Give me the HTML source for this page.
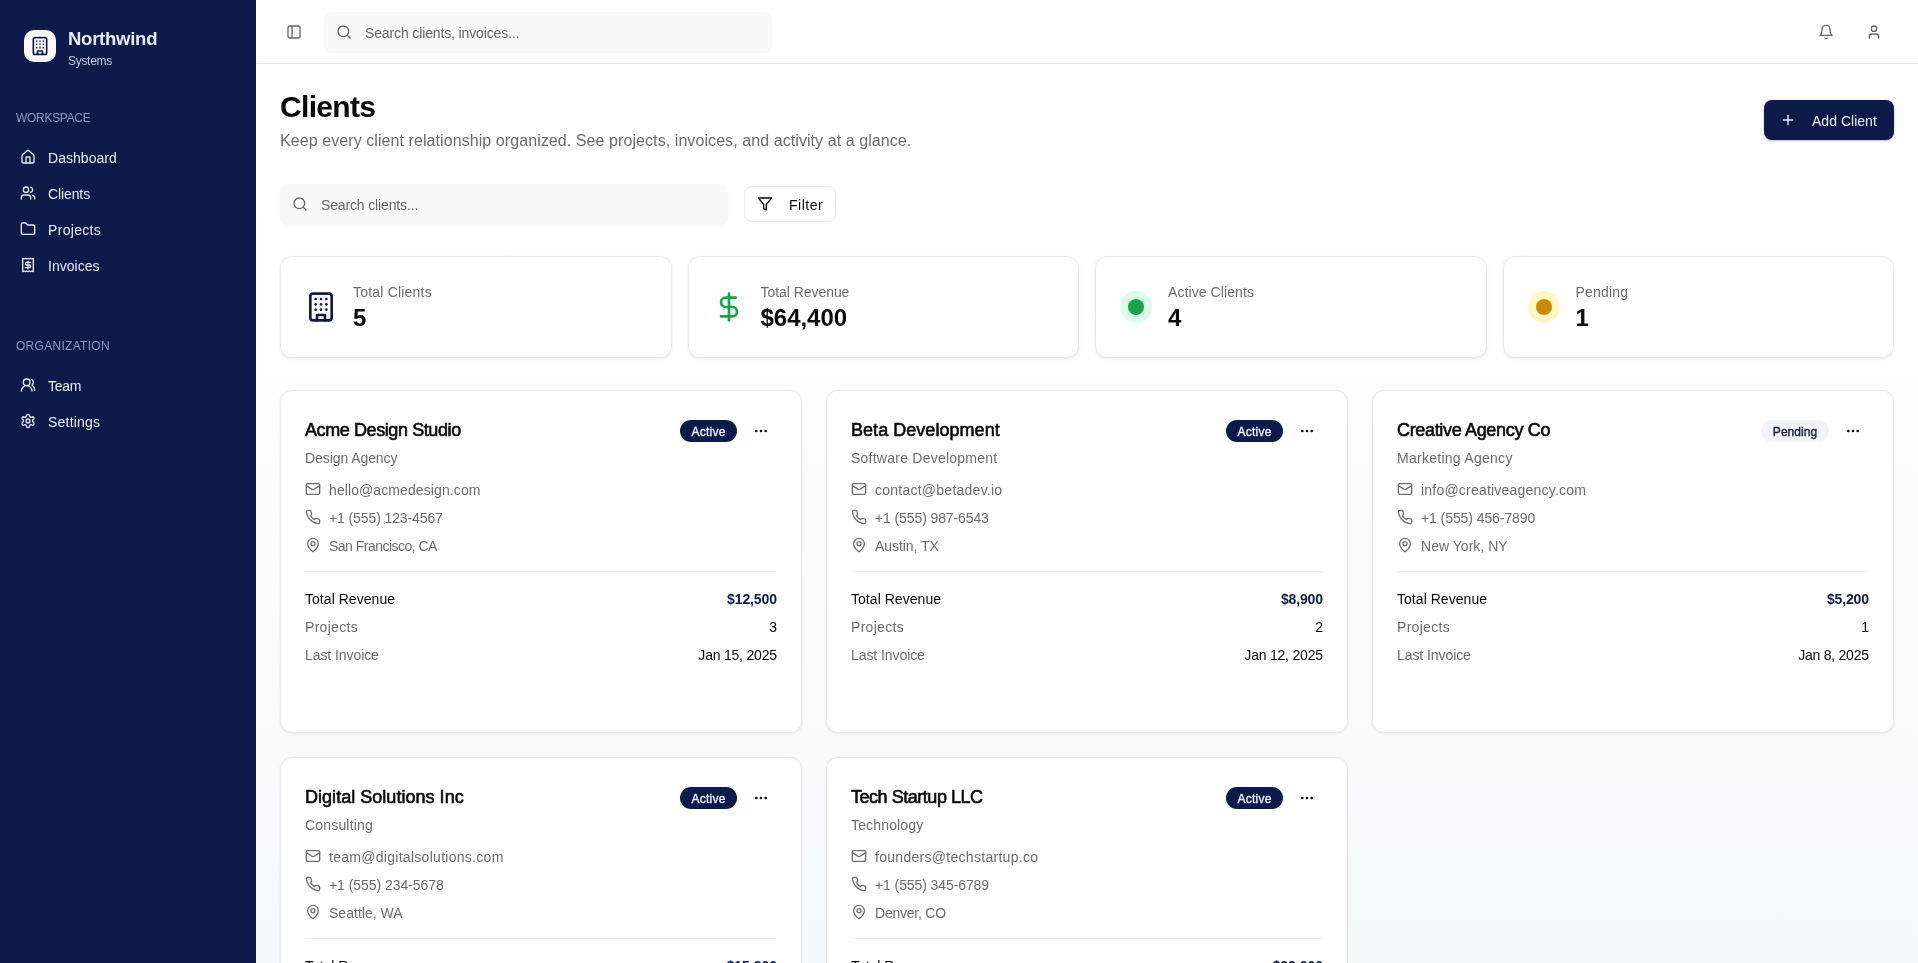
<!DOCTYPE html>
<html lang="en"><head><meta charset="utf-8"><title>Clients</title>
<style>
*{box-sizing:border-box;margin:0;padding:0}
html,body{width:1918px;height:963px;overflow:hidden}
body{font-family:"Liberation Sans",sans-serif;background:#fff;color:#0a0a0a;position:relative;will-change:transform}
.ic{display:block;flex:none}
.side{position:absolute;left:0;top:0;width:256px;height:963px;background:#0e1b4a;color:#e6ebf8}
.brand{position:absolute;left:24px;top:30px;display:flex;align-items:flex-start}
.logo{width:32px;height:32px;border-radius:10px;background:#fafafa;color:#0e1b4a;display:flex;align-items:center;justify-content:center}
.bt{margin-left:12px;margin-top:-1px}
.b1{font-size:18.5px;font-weight:bold;line-height:20px;}
.b2{font-size:12px;line-height:16px;color:#c3c8dc;margin-top:4px;}
.grp{position:absolute;left:16px;font-size:12px;line-height:16px;color:#8e97bb}
.g1{top:110px}.g2{top:338px;}
.nav{position:absolute;left:8px;width:240px;height:36px;display:flex;align-items:center;padding-left:12px;font-size:14px}
.nav b{font-weight:normal;margin-left:12px;position:relative;top:1px}
.top{position:absolute;left:256px;top:0;width:1662px;height:64px;background:#fff;border-bottom:1px solid #e5e5e5}
.tog{position:absolute;left:30px;top:24px;color:#666}
.srch{position:absolute;height:40px;border-radius:8px;background:#f9f9fa;display:flex;align-items:center;color:#666;font-size:14px;box-shadow:0 1px 2px rgba(0,0,0,.04)}
.srch .ic{margin-left:12px;color:#666}
.srch b{font-weight:normal;margin-left:13px;position:relative;top:1px}
.s1{left:68px;top:12px;width:448px}
.tr{position:absolute;right:0;top:0}
.tb{position:absolute;top:24px;color:#666}
.main{position:absolute;left:256px;top:64px;width:1662px;height:899px;overflow:hidden;background:linear-gradient(to bottom,#ffffff 0%,#fefefe 30%,#fafafb 75%,#f8f9fb 100%)}
h1{position:absolute;left:24px;top:25px;font-size:30px;line-height:36px;font-weight:bold;}
.sub{position:absolute;left:24px;top:65px;font-size:16px;line-height:24px;color:#6c6c6c;white-space:nowrap;}
.add{position:absolute;left:1508px;top:36px;width:130px;height:40px;border-radius:8px;background:#0e1b4a;color:#eaeffc;display:flex;align-items:center;font-size:14px;box-shadow:0 1px 3px rgba(15,28,77,.18),0 1px 2px rgba(15,28,77,.12)}
.add .ic{margin-left:16px}
.add b{font-weight:normal;margin-left:16px;position:relative;top:1px}
.tools{position:absolute;left:24px;top:120px;height:40px}
.s2{left:0;top:0;width:448px}
.filter{position:absolute;left:464px;top:2px;width:92px;height:36px;border:1px solid #e9e9ea;border-radius:8px;background:#fff;display:flex;align-items:center;font-size:14px;white-space:nowrap}
.filter .ic{margin-left:12px}
.filter b{font-weight:normal;margin-left:16px;position:relative;top:1px}
.stats{position:absolute;left:24px;top:192px;width:1614px;display:flex;gap:16px}
.stat{flex:1;height:102px;border:1px solid #e8e8ea;border-radius:12px;background:#fff;display:flex;align-items:center;padding:0 24px;box-shadow:0 1px 3px rgba(0,0,0,.08)}
.st{margin-left:16px;position:relative;top:1px}
.sl{font-size:14px;line-height:20px;color:#6c6c6c}
.sv{font-size:24px;line-height:32px;font-weight:bold}
.navy{color:#0e1b4a}.green{color:#16a34a}
.dot{width:32px;height:32px;border-radius:50%;display:flex;align-items:center;justify-content:center}
.dot i{width:16px;height:16px;border-radius:50%;display:block}
.dg{background:#dcfce7}.dg i{background:#16a34a}
.dy{background:#fef9c3}.dy i{background:#ca8a04}
.cards{position:absolute;left:24px;top:326px;width:1614px;display:grid;grid-template-columns:repeat(3,1fr);gap:24px}
.card{height:343px;border:1px solid #e8e8ea;border-radius:12px;background:#fff;box-shadow:0 1px 3px rgba(0,0,0,.08);padding:24px;position:relative}
.ch{display:flex;justify-content:space-between}
.cn{font-size:18px;line-height:28px;font-weight:normal;-webkit-text-stroke:.6px currentColor;position:relative;top:1px;}
.ck{font-size:14px;line-height:20px;color:#6c6c6c;margin-top:4px;position:relative;top:1px}
.cr{display:flex;align-items:flex-start}
.badge{height:22px;width:57px;text-align:center;border-radius:11px;background:#0e1b4a;color:#eaeffc;font-size:12px;font-weight:normal;-webkit-text-stroke:.35px currentColor;line-height:24px;margin-top:5px;white-space:nowrap;overflow:hidden}
.badge.pend{width:68px;margin-left:-1px;background:#f2f4f8;color:#141c44}
.more{width:32px;height:32px;display:flex;align-items:center;justify-content:center;margin-left:8px}
.ct{margin-top:9px}
.row{display:flex;align-items:center;height:28px;font-size:14px;color:#6c6c6c}
.row b{font-weight:normal;margin-left:8px}
.row .ic{color:#6e6e6e;position:relative;top:-1px}
.cf{margin-top:11px;border-top:1px solid #f1f1f2;padding-top:13px}
.kv{display:flex;justify-content:space-between;height:28px;align-items:center;font-size:14px}
.k2{color:#6c6c6c}
.v1{font-weight:bold;color:#0e1b4a}

</style></head>
<body>
<aside class="side">
<div class="brand"><div class="logo"><svg class="ic " width="20" height="20" viewBox="0 0 24 24" fill="none" stroke="currentColor" stroke-width="2" stroke-linecap="round" stroke-linejoin="round" style=""><rect width="16" height="20" x="4" y="2" rx="2" ry="2"/><path d="M9 22v-4h6v4"/><path d="M8 6h.01"/><path d="M16 6h.01"/><path d="M12 6h.01"/><path d="M12 10h.01"/><path d="M12 14h.01"/><path d="M16 10h.01"/><path d="M16 14h.01"/><path d="M8 10h.01"/><path d="M8 14h.01"/></svg></div><div class="bt"><div class="b1"><span style="letter-spacing:-0.250px">Northwind</span></div><div class="b2"><span style="letter-spacing:-0.300px">Systems</span></div></div></div>
<div class="grp g1"><span style="letter-spacing:-0.300px">WORKSPACE</span></div>
<div class="nav" style="top:139px"><svg class="ic " width="16" height="16" viewBox="0 0 24 24" fill="none" stroke="currentColor" stroke-width="2" stroke-linecap="round" stroke-linejoin="round" style=""><path d="M15 21v-8a1 1 0 0 0-1-1h-4a1 1 0 0 0-1 1v8"/><path d="M3 10a2 2 0 0 1 .709-1.528l7-5.999a2 2 0 0 1 2.582 0l7 5.999A2 2 0 0 1 21 10v9a2 2 0 0 1-2 2H5a2 2 0 0 1-2-2z"/></svg><b><span style="letter-spacing:0.044px">Dashboard</span></b></div>
<div class="nav" style="top:175px"><svg class="ic " width="16" height="16" viewBox="0 0 24 24" fill="none" stroke="currentColor" stroke-width="2" stroke-linecap="round" stroke-linejoin="round" style=""><path d="M16 21v-2a4 4 0 0 0-4-4H6a4 4 0 0 0-4 4v2"/><circle cx="9" cy="7" r="4"/><path d="M22 21v-2a4 4 0 0 0-3-3.87"/><path d="M16 3.13a4 4 0 0 1 0 7.75"/></svg><b><span style="letter-spacing:-0.108px">Clients</span></b></div>
<div class="nav" style="top:211px"><svg class="ic " width="16" height="16" viewBox="0 0 24 24" fill="none" stroke="currentColor" stroke-width="2" stroke-linecap="round" stroke-linejoin="round" style=""><path d="M20 20a2 2 0 0 0 2-2V8a2 2 0 0 0-2-2h-7.9a2 2 0 0 1-1.69-.9L9.6 3.9A2 2 0 0 0 7.93 3H4a2 2 0 0 0-2 2v13a2 2 0 0 0 2 2Z"/></svg><b><span style="letter-spacing:0.314px">Projects</span></b></div>
<div class="nav" style="top:247px"><svg class="ic " width="16" height="16" viewBox="0 0 24 24" fill="none" stroke="currentColor" stroke-width="2" stroke-linecap="round" stroke-linejoin="round" style=""><path d="M4 2v20l2-1 2 1 2-1 2 1 2-1 2 1 2-1 2 1V2l-2 1-2-1-2 1-2-1-2 1-2-1-2 1Z"/><path d="M16 8h-6a2 2 0 1 0 0 4h4a2 2 0 1 1 0 4H8"/><path d="M12 17.5v-11"/></svg><b><span style="letter-spacing:0.014px">Invoices</span></b></div>
<div class="grp g2"><span style="letter-spacing:0.291px">ORGANIZATION</span></div>
<div class="nav" style="top:367px"><svg class="ic " width="16" height="16" viewBox="0 0 24 24" fill="none" stroke="currentColor" stroke-width="2" stroke-linecap="round" stroke-linejoin="round" style=""><path d="M18 21a8 8 0 0 0-16 0"/><circle cx="10" cy="8" r="5"/><path d="M22 20c0-3.37-2-6.5-4-8a5 5 0 0 0-.45-8.3"/></svg><b><span style="letter-spacing:-0.267px">Team</span></b></div>
<div class="nav" style="top:403px"><svg class="ic " width="16" height="16" viewBox="0 0 24 24" fill="none" stroke="currentColor" stroke-width="2" stroke-linecap="round" stroke-linejoin="round" style=""><path d="M12.22 2h-.44a2 2 0 0 0-2 2v.18a2 2 0 0 1-1 1.73l-.43.25a2 2 0 0 1-2 0l-.15-.08a2 2 0 0 0-2.73.73l-.22.38a2 2 0 0 0 .73 2.73l.15.1a2 2 0 0 1 1 1.72v.51a2 2 0 0 1-1 1.74l-.15.09a2 2 0 0 0-.73 2.73l.22.38a2 2 0 0 0 2.73.73l.15-.08a2 2 0 0 1 2 0l.43.25a2 2 0 0 1 1 1.73V20a2 2 0 0 0 2 2h.44a2 2 0 0 0 2-2v-.18a2 2 0 0 1 1-1.73l.43-.25a2 2 0 0 1 2 0l.15.08a2 2 0 0 0 2.73-.73l.22-.39a2 2 0 0 0-.73-2.73l-.15-.08a2 2 0 0 1-1-1.74v-.5a2 2 0 0 1 1-1.74l.15-.09a2 2 0 0 0 .73-2.73l-.22-.38a2 2 0 0 0-2.73-.73l-.15.08a2 2 0 0 1-2 0l-.43-.25a2 2 0 0 1-1-1.73V4a2 2 0 0 0-2-2z"/><circle cx="12" cy="12" r="3"/></svg><b><span style="letter-spacing:0.214px">Settings</span></b></div>
</aside>
<header class="top">
<div class="tog"><svg class="ic " width="16" height="16" viewBox="0 0 24 24" fill="none" stroke="currentColor" stroke-width="2" stroke-linecap="round" stroke-linejoin="round" style=""><rect width="18" height="18" x="3" y="3" rx="2"/><path d="M9 3v18"/></svg></div>
<div class="srch s1"><svg class="ic " width="16" height="16" viewBox="0 0 24 24" fill="none" stroke="currentColor" stroke-width="2" stroke-linecap="round" stroke-linejoin="round" style=""><circle cx="11" cy="11" r="8"/><path d="m21 21-4.3-4.3"/></svg><b><span style="letter-spacing:-0.131px">Search clients, invoices...</span></b></div>
<div class="tb" style="left:1562px"><svg class="ic " width="16" height="16" viewBox="0 0 24 24" fill="none" stroke="currentColor" stroke-width="2" stroke-linecap="round" stroke-linejoin="round" style=""><path d="M6 8a6 6 0 0 1 12 0c0 7 3 9 3 9H3s3-2 3-9"/><path d="M10.3 21a1.94 1.94 0 0 0 3.4 0"/></svg></div><div class="tb" style="left:1610px"><svg class="ic " width="16" height="16" viewBox="0 0 24 24" fill="none" stroke="currentColor" stroke-width="2" stroke-linecap="round" stroke-linejoin="round" style=""><path d="M19 21v-2a4 4 0 0 0-4-4H9a4 4 0 0 0-4 4v2"/><circle cx="12" cy="7" r="4"/></svg></div>
</header>
<main class="main">
<div class="ph"><div><h1><span style="letter-spacing:-0.683px">Clients</span></h1><p class="sub"><span style="letter-spacing:0.077px">Keep every client relationship organized. See projects, invoices, and activity at a glance.</span></p></div>
<div class="add"><svg class="ic " width="16" height="16" viewBox="0 0 24 24" fill="none" stroke="currentColor" stroke-width="2" stroke-linecap="round" stroke-linejoin="round" style=""><path d="M5 12h14"/><path d="M12 5v14"/></svg><b><span style="letter-spacing:0.022px">Add Client</span></b></div></div>
<div class="tools"><div class="srch s2"><svg class="ic " width="16" height="16" viewBox="0 0 24 24" fill="none" stroke="currentColor" stroke-width="2" stroke-linecap="round" stroke-linejoin="round" style=""><circle cx="11" cy="11" r="8"/><path d="m21 21-4.3-4.3"/></svg><b><span style="letter-spacing:-0.144px">Search clients...</span></b></div><div class="filter"><svg class="ic " width="16" height="16" viewBox="0 0 24 24" fill="none" stroke="currentColor" stroke-width="2" stroke-linecap="round" stroke-linejoin="round" style=""><polygon points="22 3 2 3 10 12.46 10 19 14 21 14 12.46 22 3"/></svg><b><span style="letter-spacing:0.520px">Filter</span></b></div></div>
<div class="stats">
<div class="stat"><svg class="ic navy" width="32" height="32" viewBox="0 0 24 24" fill="none" stroke="currentColor" stroke-width="2" stroke-linecap="round" stroke-linejoin="round" style=""><rect width="16" height="20" x="4" y="2" rx="2" ry="2"/><path d="M9 22v-4h6v4"/><path d="M8 6h.01"/><path d="M16 6h.01"/><path d="M12 6h.01"/><path d="M12 10h.01"/><path d="M12 14h.01"/><path d="M16 10h.01"/><path d="M16 14h.01"/><path d="M8 10h.01"/><path d="M8 14h.01"/></svg><div class="st"><div class="sl"><span style="letter-spacing:0.200px">Total Clients</span></div><div class="sv"><span>5</span></div></div></div>
<div class="stat"><svg class="ic green" width="32" height="32" viewBox="0 0 24 24" fill="none" stroke="currentColor" stroke-width="2" stroke-linecap="round" stroke-linejoin="round" style=""><line x1="12" x2="12" y1="2" y2="22"/><path d="M17 5H9.5a3.5 3.5 0 0 0 0 7h5a3.5 3.5 0 0 1 0 7H6"/></svg><div class="st"><div class="sl"><span style="letter-spacing:-0.050px">Total Revenue</span></div><div class="sv"><span style="letter-spacing:-0.033px">$64,400</span></div></div></div>
<div class="stat"><div class="dot dg"><i></i></div><div class="st"><div class="sl"><span style="letter-spacing:0.085px">Active Clients</span></div><div class="sv"><span>4</span></div></div></div>
<div class="stat"><div class="dot dy"><i></i></div><div class="st"><div class="sl"><span style="letter-spacing:0.200px">Pending</span></div><div class="sv"><span>1</span></div></div></div>
</div>
<div class="cards">
<div class="card">
<div class="ch"><div><div class="cn"><span style="letter-spacing:-0.406px">Acme Design Studio</span></div><div class="ck"><span style="letter-spacing:-0.075px">Design Agency</span></div></div><div class="cr"><span class="badge"><span style="letter-spacing:0.240px">Active</span></span><span class="more"><svg class="ic " width="16" height="16" viewBox="0 0 24 24" fill="none" stroke="currentColor" stroke-width="2" stroke-linecap="round" stroke-linejoin="round" style=""><circle cx="12" cy="12" r="1"/><circle cx="19" cy="12" r="1"/><circle cx="5" cy="12" r="1"/></svg></span></div></div>
<div class="ct">
<div class="row"><svg class="ic " width="16" height="16" viewBox="0 0 24 24" fill="none" stroke="currentColor" stroke-width="2" stroke-linecap="round" stroke-linejoin="round" style=""><rect width="20" height="16" x="2" y="4" rx="2"/><path d="m22 7-8.97 5.7a1.94 1.94 0 0 1-2.06 0L2 7"/></svg><b><span style="letter-spacing:0.095px">hello@acmedesign.com</span></b></div>
<div class="row"><svg class="ic " width="16" height="16" viewBox="0 0 24 24" fill="none" stroke="currentColor" stroke-width="2" stroke-linecap="round" stroke-linejoin="round" style=""><path d="M22 16.92v3a2 2 0 0 1-2.18 2 19.79 19.79 0 0 1-8.63-3.07 19.5 19.5 0 0 1-6-6 19.79 19.79 0 0 1-3.07-8.67A2 2 0 0 1 4.11 2h3a2 2 0 0 1 2 1.72 12.84 12.84 0 0 0 .7 2.81 2 2 0 0 1-.45 2.11L8.09 9.91a16 16 0 0 0 6 6l1.27-1.27a2 2 0 0 1 2.11-.45 12.84 12.84 0 0 0 2.81.7A2 2 0 0 1 22 16.92z"/></svg><b><span style="letter-spacing:-0.106px">+1 (555) 123-4567</span></b></div>
<div class="row"><svg class="ic " width="16" height="16" viewBox="0 0 24 24" fill="none" stroke="currentColor" stroke-width="2" stroke-linecap="round" stroke-linejoin="round" style=""><path d="M20 10c0 4.993-5.539 10.193-7.399 11.799a1 1 0 0 1-1.202 0C9.539 20.193 4 14.993 4 10a8 8 0 0 1 16 0"/><circle cx="12" cy="10" r="3"/></svg><b><span style="letter-spacing:-0.519px">San Francisco, CA</span></b></div>
</div>
<div class="cf">
<div class="kv"><span class="k1"><span style="letter-spacing:0.042px">Total Revenue</span></span><span class="v1"><span style="letter-spacing:-0.117px;margin-right:0.117px">$12,500</span></span></div>
<div class="kv"><span class="k2"><span style="letter-spacing:0.300px">Projects</span></span><span class="v2"><span>3</span></span></div>
<div class="kv"><span class="k2"><span style="letter-spacing:-0.073px">Last Invoice</span></span><span class="v2"><span style="letter-spacing:-0.209px;margin-right:0.209px">Jan 15, 2025</span></span></div>
</div>
</div>
<div class="card">
<div class="ch"><div><div class="cn"><span style="letter-spacing:0.040px">Beta Development</span></div><div class="ck"><span style="letter-spacing:0.242px">Software Development</span></div></div><div class="cr"><span class="badge"><span style="letter-spacing:0.240px">Active</span></span><span class="more"><svg class="ic " width="16" height="16" viewBox="0 0 24 24" fill="none" stroke="currentColor" stroke-width="2" stroke-linecap="round" stroke-linejoin="round" style=""><circle cx="12" cy="12" r="1"/><circle cx="19" cy="12" r="1"/><circle cx="5" cy="12" r="1"/></svg></span></div></div>
<div class="ct">
<div class="row"><svg class="ic " width="16" height="16" viewBox="0 0 24 24" fill="none" stroke="currentColor" stroke-width="2" stroke-linecap="round" stroke-linejoin="round" style=""><rect width="20" height="16" x="2" y="4" rx="2"/><path d="m22 7-8.97 5.7a1.94 1.94 0 0 1-2.06 0L2 7"/></svg><b><span style="letter-spacing:0.247px">contact@betadev.io</span></b></div>
<div class="row"><svg class="ic " width="16" height="16" viewBox="0 0 24 24" fill="none" stroke="currentColor" stroke-width="2" stroke-linecap="round" stroke-linejoin="round" style=""><path d="M22 16.92v3a2 2 0 0 1-2.18 2 19.79 19.79 0 0 1-8.63-3.07 19.5 19.5 0 0 1-6-6 19.79 19.79 0 0 1-3.07-8.67A2 2 0 0 1 4.11 2h3a2 2 0 0 1 2 1.72 12.84 12.84 0 0 0 .7 2.81 2 2 0 0 1-.45 2.11L8.09 9.91a16 16 0 0 0 6 6l1.27-1.27a2 2 0 0 1 2.11-.45 12.84 12.84 0 0 0 2.81.7A2 2 0 0 1 22 16.92z"/></svg><b><span style="letter-spacing:-0.106px">+1 (555) 987-6543</span></b></div>
<div class="row"><svg class="ic " width="16" height="16" viewBox="0 0 24 24" fill="none" stroke="currentColor" stroke-width="2" stroke-linecap="round" stroke-linejoin="round" style=""><path d="M20 10c0 4.993-5.539 10.193-7.399 11.799a1 1 0 0 1-1.202 0C9.539 20.193 4 14.993 4 10a8 8 0 0 1 16 0"/><circle cx="12" cy="10" r="3"/></svg><b><span style="letter-spacing:-0.067px">Austin, TX</span></b></div>
</div>
<div class="cf">
<div class="kv"><span class="k1"><span style="letter-spacing:0.042px">Total Revenue</span></span><span class="v1"><span style="letter-spacing:-0.160px;margin-right:0.160px">$8,900</span></span></div>
<div class="kv"><span class="k2"><span style="letter-spacing:0.300px">Projects</span></span><span class="v2"><span>2</span></span></div>
<div class="kv"><span class="k2"><span style="letter-spacing:-0.073px">Last Invoice</span></span><span class="v2"><span style="letter-spacing:-0.209px;margin-right:0.209px">Jan 12, 2025</span></span></div>
</div>
</div>
<div class="card">
<div class="ch"><div><div class="cn"><span style="letter-spacing:-0.335px">Creative Agency Co</span></div><div class="ck"><span style="letter-spacing:0.273px">Marketing Agency</span></div></div><div class="cr"><span class="badge pend"><span style="letter-spacing:0.033px">Pending</span></span><span class="more"><svg class="ic " width="16" height="16" viewBox="0 0 24 24" fill="none" stroke="currentColor" stroke-width="2" stroke-linecap="round" stroke-linejoin="round" style=""><circle cx="12" cy="12" r="1"/><circle cx="19" cy="12" r="1"/><circle cx="5" cy="12" r="1"/></svg></span></div></div>
<div class="ct">
<div class="row"><svg class="ic " width="16" height="16" viewBox="0 0 24 24" fill="none" stroke="currentColor" stroke-width="2" stroke-linecap="round" stroke-linejoin="round" style=""><rect width="20" height="16" x="2" y="4" rx="2"/><path d="m22 7-8.97 5.7a1.94 1.94 0 0 1-2.06 0L2 7"/></svg><b><span style="letter-spacing:0.214px">info@creativeagency.com</span></b></div>
<div class="row"><svg class="ic " width="16" height="16" viewBox="0 0 24 24" fill="none" stroke="currentColor" stroke-width="2" stroke-linecap="round" stroke-linejoin="round" style=""><path d="M22 16.92v3a2 2 0 0 1-2.18 2 19.79 19.79 0 0 1-8.63-3.07 19.5 19.5 0 0 1-6-6 19.79 19.79 0 0 1-3.07-8.67A2 2 0 0 1 4.11 2h3a2 2 0 0 1 2 1.72 12.84 12.84 0 0 0 .7 2.81 2 2 0 0 1-.45 2.11L8.09 9.91a16 16 0 0 0 6 6l1.27-1.27a2 2 0 0 1 2.11-.45 12.84 12.84 0 0 0 2.81.7A2 2 0 0 1 22 16.92z"/></svg><b><span style="letter-spacing:-0.081px">+1 (555) 456-7890</span></b></div>
<div class="row"><svg class="ic " width="16" height="16" viewBox="0 0 24 24" fill="none" stroke="currentColor" stroke-width="2" stroke-linecap="round" stroke-linejoin="round" style=""><path d="M20 10c0 4.993-5.539 10.193-7.399 11.799a1 1 0 0 1-1.202 0C9.539 20.193 4 14.993 4 10a8 8 0 0 1 16 0"/><circle cx="12" cy="10" r="3"/></svg><b><span style="letter-spacing:0.027px">New York, NY</span></b></div>
</div>
<div class="cf">
<div class="kv"><span class="k1"><span style="letter-spacing:0.042px">Total Revenue</span></span><span class="v1"><span style="letter-spacing:-0.160px;margin-right:0.160px">$5,200</span></span></div>
<div class="kv"><span class="k2"><span style="letter-spacing:0.300px">Projects</span></span><span class="v2"><span>1</span></span></div>
<div class="kv"><span class="k2"><span style="letter-spacing:-0.073px">Last Invoice</span></span><span class="v2"><span style="letter-spacing:-0.230px;margin-right:0.230px">Jan 8, 2025</span></span></div>
</div>
</div>
<div class="card">
<div class="ch"><div><div class="cn"><span style="letter-spacing:0.030px">Digital Solutions Inc</span></div><div class="ck"><span style="letter-spacing:0.178px">Consulting</span></div></div><div class="cr"><span class="badge"><span style="letter-spacing:0.240px">Active</span></span><span class="more"><svg class="ic " width="16" height="16" viewBox="0 0 24 24" fill="none" stroke="currentColor" stroke-width="2" stroke-linecap="round" stroke-linejoin="round" style=""><circle cx="12" cy="12" r="1"/><circle cx="19" cy="12" r="1"/><circle cx="5" cy="12" r="1"/></svg></span></div></div>
<div class="ct">
<div class="row"><svg class="ic " width="16" height="16" viewBox="0 0 24 24" fill="none" stroke="currentColor" stroke-width="2" stroke-linecap="round" stroke-linejoin="round" style=""><rect width="20" height="16" x="2" y="4" rx="2"/><path d="m22 7-8.97 5.7a1.94 1.94 0 0 1-2.06 0L2 7"/></svg><b><span style="letter-spacing:0.283px">team@digitalsolutions.com</span></b></div>
<div class="row"><svg class="ic " width="16" height="16" viewBox="0 0 24 24" fill="none" stroke="currentColor" stroke-width="2" stroke-linecap="round" stroke-linejoin="round" style=""><path d="M22 16.92v3a2 2 0 0 1-2.18 2 19.79 19.79 0 0 1-8.63-3.07 19.5 19.5 0 0 1-6-6 19.79 19.79 0 0 1-3.07-8.67A2 2 0 0 1 4.11 2h3a2 2 0 0 1 2 1.72 12.84 12.84 0 0 0 .7 2.81 2 2 0 0 1-.45 2.11L8.09 9.91a16 16 0 0 0 6 6l1.27-1.27a2 2 0 0 1 2.11-.45 12.84 12.84 0 0 0 2.81.7A2 2 0 0 1 22 16.92z"/></svg><b><span style="letter-spacing:-0.056px">+1 (555) 234-5678</span></b></div>
<div class="row"><svg class="ic " width="16" height="16" viewBox="0 0 24 24" fill="none" stroke="currentColor" stroke-width="2" stroke-linecap="round" stroke-linejoin="round" style=""><path d="M20 10c0 4.993-5.539 10.193-7.399 11.799a1 1 0 0 1-1.202 0C9.539 20.193 4 14.993 4 10a8 8 0 0 1 16 0"/><circle cx="12" cy="10" r="3"/></svg><b><span style="letter-spacing:0.020px">Seattle, WA</span></b></div>
</div>
<div class="cf">
<div class="kv"><span class="k1"><span style="letter-spacing:-0.050px">Total Revenue</span></span><span class="v1"><span>$15,800</span></span></div>
<div class="kv"><span class="k2"><span style="letter-spacing:0.314px">Projects</span></span><span class="v2"><span>4</span></span></div>
<div class="kv"><span class="k2"><span style="letter-spacing:-0.073px">Last Invoice</span></span><span class="v2"><span>Jan 10, 2025</span></span></div>
</div>
</div>
<div class="card">
<div class="ch"><div><div class="cn"><span style="letter-spacing:-0.467px">Tech Startup LLC</span></div><div class="ck"><span style="letter-spacing:0.156px">Technology</span></div></div><div class="cr"><span class="badge"><span style="letter-spacing:0.240px">Active</span></span><span class="more"><svg class="ic " width="16" height="16" viewBox="0 0 24 24" fill="none" stroke="currentColor" stroke-width="2" stroke-linecap="round" stroke-linejoin="round" style=""><circle cx="12" cy="12" r="1"/><circle cx="19" cy="12" r="1"/><circle cx="5" cy="12" r="1"/></svg></span></div></div>
<div class="ct">
<div class="row"><svg class="ic " width="16" height="16" viewBox="0 0 24 24" fill="none" stroke="currentColor" stroke-width="2" stroke-linecap="round" stroke-linejoin="round" style=""><rect width="20" height="16" x="2" y="4" rx="2"/><path d="m22 7-8.97 5.7a1.94 1.94 0 0 1-2.06 0L2 7"/></svg><b><span style="letter-spacing:0.291px">founders@techstartup.co</span></b></div>
<div class="row"><svg class="ic " width="16" height="16" viewBox="0 0 24 24" fill="none" stroke="currentColor" stroke-width="2" stroke-linecap="round" stroke-linejoin="round" style=""><path d="M22 16.92v3a2 2 0 0 1-2.18 2 19.79 19.79 0 0 1-8.63-3.07 19.5 19.5 0 0 1-6-6 19.79 19.79 0 0 1-3.07-8.67A2 2 0 0 1 4.11 2h3a2 2 0 0 1 2 1.72 12.84 12.84 0 0 0 .7 2.81 2 2 0 0 1-.45 2.11L8.09 9.91a16 16 0 0 0 6 6l1.27-1.27a2 2 0 0 1 2.11-.45 12.84 12.84 0 0 0 2.81.7A2 2 0 0 1 22 16.92z"/></svg><b><span style="letter-spacing:-0.094px">+1 (555) 345-6789</span></b></div>
<div class="row"><svg class="ic " width="16" height="16" viewBox="0 0 24 24" fill="none" stroke="currentColor" stroke-width="2" stroke-linecap="round" stroke-linejoin="round" style=""><path d="M20 10c0 4.993-5.539 10.193-7.399 11.799a1 1 0 0 1-1.202 0C9.539 20.193 4 14.993 4 10a8 8 0 0 1 16 0"/><circle cx="12" cy="10" r="3"/></svg><b><span style="letter-spacing:-0.222px">Denver, CO</span></b></div>
</div>
<div class="cf">
<div class="kv"><span class="k1"><span style="letter-spacing:-0.050px">Total Revenue</span></span><span class="v1"><span>$22,000</span></span></div>
<div class="kv"><span class="k2"><span style="letter-spacing:0.314px">Projects</span></span><span class="v2"><span>5</span></span></div>
<div class="kv"><span class="k2"><span style="letter-spacing:-0.073px">Last Invoice</span></span><span class="v2"><span>Jan 14, 2025</span></span></div>
</div>
</div>
</div>
</main>
</body></html>
